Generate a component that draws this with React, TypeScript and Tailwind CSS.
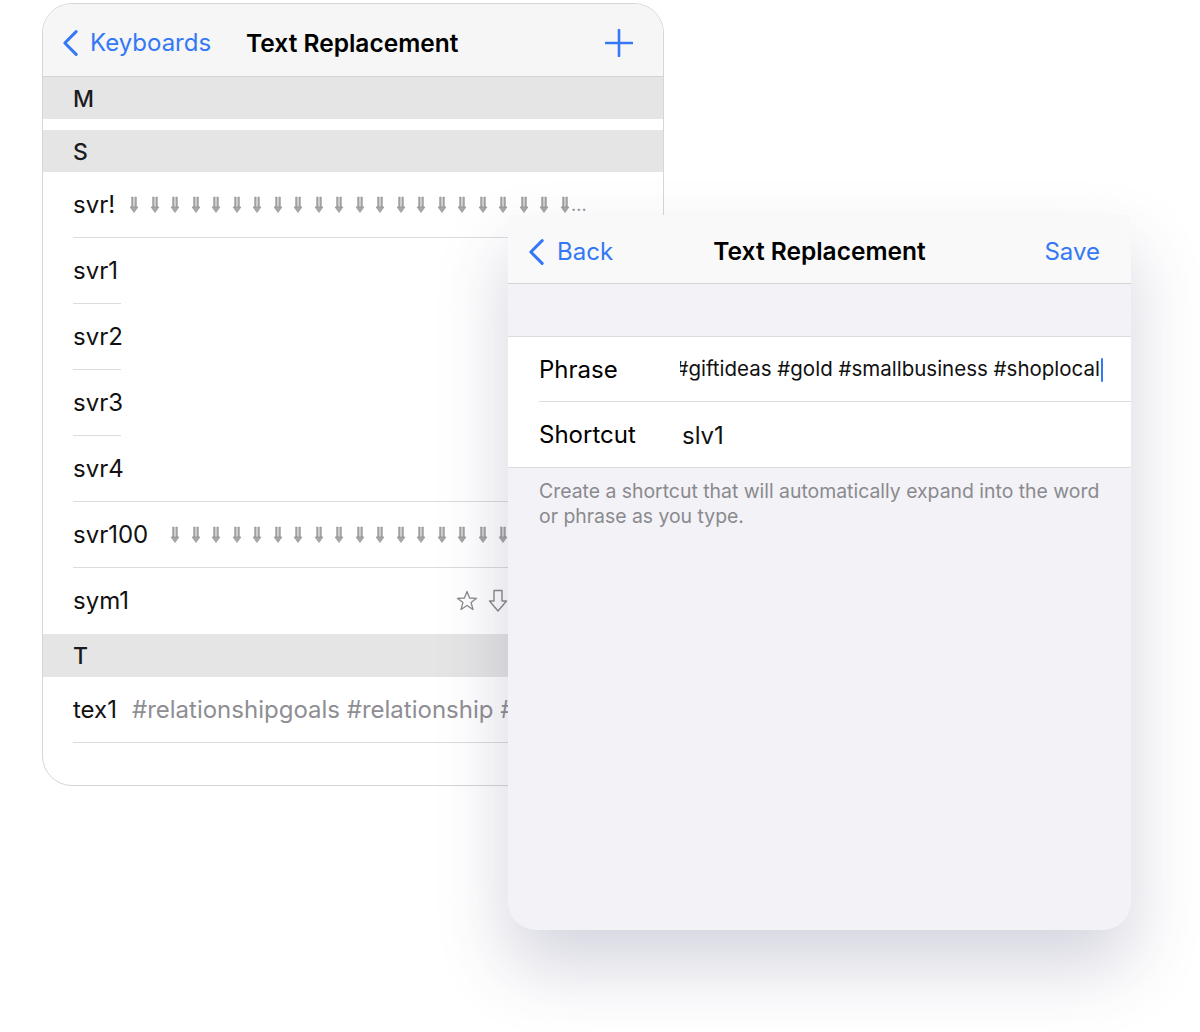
const BLUE = 'text-[#3478f6]';

function Chevron({ className = '' }: { className?: string }) {
  return (
    <svg viewBox="0 0 18 28" className={className} fill="none">
      <path d="M15 2 L3 14 L15 26" stroke="#3478f6" strokeWidth="3.2" strokeLinecap="round" strokeLinejoin="round" />
    </svg>
  );
}

function DownArrow() {
  return (
    <svg viewBox="0 0 10 18" className="w-[10px] h-[18px] shrink-0">
      <path d="M2.6 1 h1.6 v10 h-1.6 z M5.8 1 h1.6 v10 h-1.6 z" fill="#a8a8a8" stroke="#8c8c8c" strokeWidth="0.5" />
      <path d="M1 11 L9 11 L5 16.5 Z" fill="#a8a8a8" stroke="#8c8c8c" strokeWidth="0.6" strokeLinejoin="round" />
    </svg>
  );
}

function Arrows({ count, ellipsis = false }: { count: number; ellipsis?: boolean }) {
  return (
    <div className="flex items-center gap-[10.5px] overflow-hidden">
      {Array.from({ length: count }).map((_, i) => (
        <DownArrow key={i} />
      ))}
      {ellipsis && <span className="text-[18px] text-[#8e8e93] -ml-[9px] leading-none">...</span>}
    </div>
  );
}

function SectionHeader({ letter, h = 'h-[42px]' }: { letter: string; h?: string }) {
  return (
    <div className={`${h} bg-[#e5e5e5] flex items-center pl-[30px] pt-[2px] text-[23px] font-medium text-[#1c1c1e]`}>
      {letter}
    </div>
  );
}

function Row({ label, children, sep = 'full', gap = 'gap-[17px]' }: { label: string; children?: React.ReactNode; sep?: 'full' | 'short' | 'none'; gap?: string }) {
  return (
    <div className="pl-[30px] h-[66px] relative">
      <div className={`h-full flex items-center ${gap} text-[24px] text-[#111]`}>
        <span className="shrink-0">{label}</span>
        {children}
      </div>
      {sep === 'full' && <div className="absolute bottom-0 left-[30px] right-0 h-px bg-[#dcdcdc]" />}
      {sep === 'short' && <div className="absolute bottom-0 left-[30px] w-[48px] h-px bg-[#dcdcdc]" />}
    </div>
  );
}

function BackCard() {
  return (
    <div className="ml-[42px] mt-[3px] w-[622px] h-[783px] rounded-[30px] border border-[#d6d6d6] bg-white overflow-hidden">
      <div className="h-[73px] bg-[#f6f6f6] border-b border-[#d4d4d4] flex items-center pl-[19px] pr-[30px] pt-[6px]">
        <Chevron className="w-[17px] h-[28px]" />
        <span className={`ml-[11px] text-[24px] ${BLUE}`}>Keyboards</span>
        <span className="ml-[35px] text-[24.5px] font-semibold text-black">Text Replacement</span>
        <svg viewBox="0 0 28 28" className="ml-auto w-[28px] h-[28px]">
          <path d="M14 1 V27 M1 14 H27" stroke="#3478f6" strokeWidth="2.6" strokeLinecap="round" />
        </svg>
      </div>
      <SectionHeader letter="M" />
      <div className="h-[11px]" />
      <SectionHeader letter="S" />
      <Row label="svr!" gap="gap-[14px]">
        <Arrows count={22} ellipsis />
      </Row>
      <Row label="svr1" sep="short" />
      <Row label="svr2" sep="short" />
      <Row label="svr3" sep="short" />
      <Row label="svr4" />
      <Row label="svr100" gap="gap-[22px]">
        <Arrows count={18} />
      </Row>
      <Row label="sym1" sep="none">
        <div className="ml-auto mr-[155px] flex items-center gap-[10px]">
          <svg viewBox="0 0 22 22" className="w-[22px] h-[22px]">
            <path
              d="M11 1.5 L13.6 8 L20.6 8.3 L15.1 12.6 L17 19.5 L11 15.5 L5 19.5 L6.9 12.6 L1.4 8.3 L8.4 8 Z"
              fill="none"
              stroke="#8a8a8a"
              strokeWidth="1.3"
              strokeLinejoin="round"
            />
          </svg>
          <svg viewBox="0 0 20 24" className="w-[20px] h-[24px]">
            <path d="M6 1.5 H14 V12 H18.5 L10 22 L1.5 12 H6 Z" fill="none" stroke="#8a8a8a" strokeWidth="1.4" strokeLinejoin="round" />
          </svg>
        </div>
      </Row>
      <SectionHeader letter="T" h="h-[43px]" />
      <Row label="tex1" gap="gap-[15px]">
        <span className="text-[#8e8e93] whitespace-nowrap">#relationshipgoals #relationship #love #couple</span>
      </Row>
    </div>
  );
}

function FrontCard() {
  return (
    <div className="absolute left-[508px] top-[215px] w-[623px] h-[715px] rounded-t-[4px] rounded-b-[28px] bg-[#f2f2f7] overflow-hidden shadow-[0_36px_70px_rgba(60,60,110,0.22)]">
      <div className="h-[69px] bg-[#f9f9f9] border-b border-[#d2d2d6] relative flex items-center pl-[20px] pr-[31px] pt-[5px]">
        <Chevron className="w-[17px] h-[28px]" />
        <span className={`ml-[12px] text-[24px] ${BLUE}`}>Back</span>
        <span className="absolute left-0 right-0 text-center text-[24.5px] font-semibold text-black pointer-events-none">Text Replacement</span>
        <span className={`ml-auto text-[24px] ${BLUE}`}>Save</span>
      </div>
      <div className="h-[52px]" />
      <div className="bg-white border-t border-b border-[#dcdce0]">
        <div className="pl-[31px] h-[65px] flex items-center relative">
          <span className="w-[141px] shrink-0 text-[24px] text-black">Phrase</span>
          <div className="w-[420px] flex justify-end overflow-hidden">
            <span className="whitespace-nowrap text-[20.5px] text-[#111]">#giftideas #gold #smallbusiness #shoplocal</span>
          </div>
          <span className="ml-[1px] w-[2px] h-[24px] bg-[#3478f6] rounded-full" />
          <div className="absolute bottom-0 left-[31px] right-0 h-px bg-[#dcdce0]" />
        </div>
        <div className="pl-[31px] h-[65px] flex items-center">
          <span className="w-[143px] shrink-0 text-[24px] text-black">Shortcut</span>
          <span className="text-[24px] text-[#111] mt-[2px]">slv1</span>
        </div>
      </div>
      <p className="pl-[31px] pr-[28px] pt-[11px] text-[19.4px] leading-[25px] text-[#8a8a8e]">
        Create a shortcut that will automatically expand into the word or phrase as you type.
      </p>
    </div>
  );
}

export default function App() {
  return (
    <div className="relative w-[1200px] h-[1032px] bg-white overflow-hidden font-['Inter','Noto_Sans',sans-serif]">
      <BackCard />
      <FrontCard />
    </div>
  );
}
